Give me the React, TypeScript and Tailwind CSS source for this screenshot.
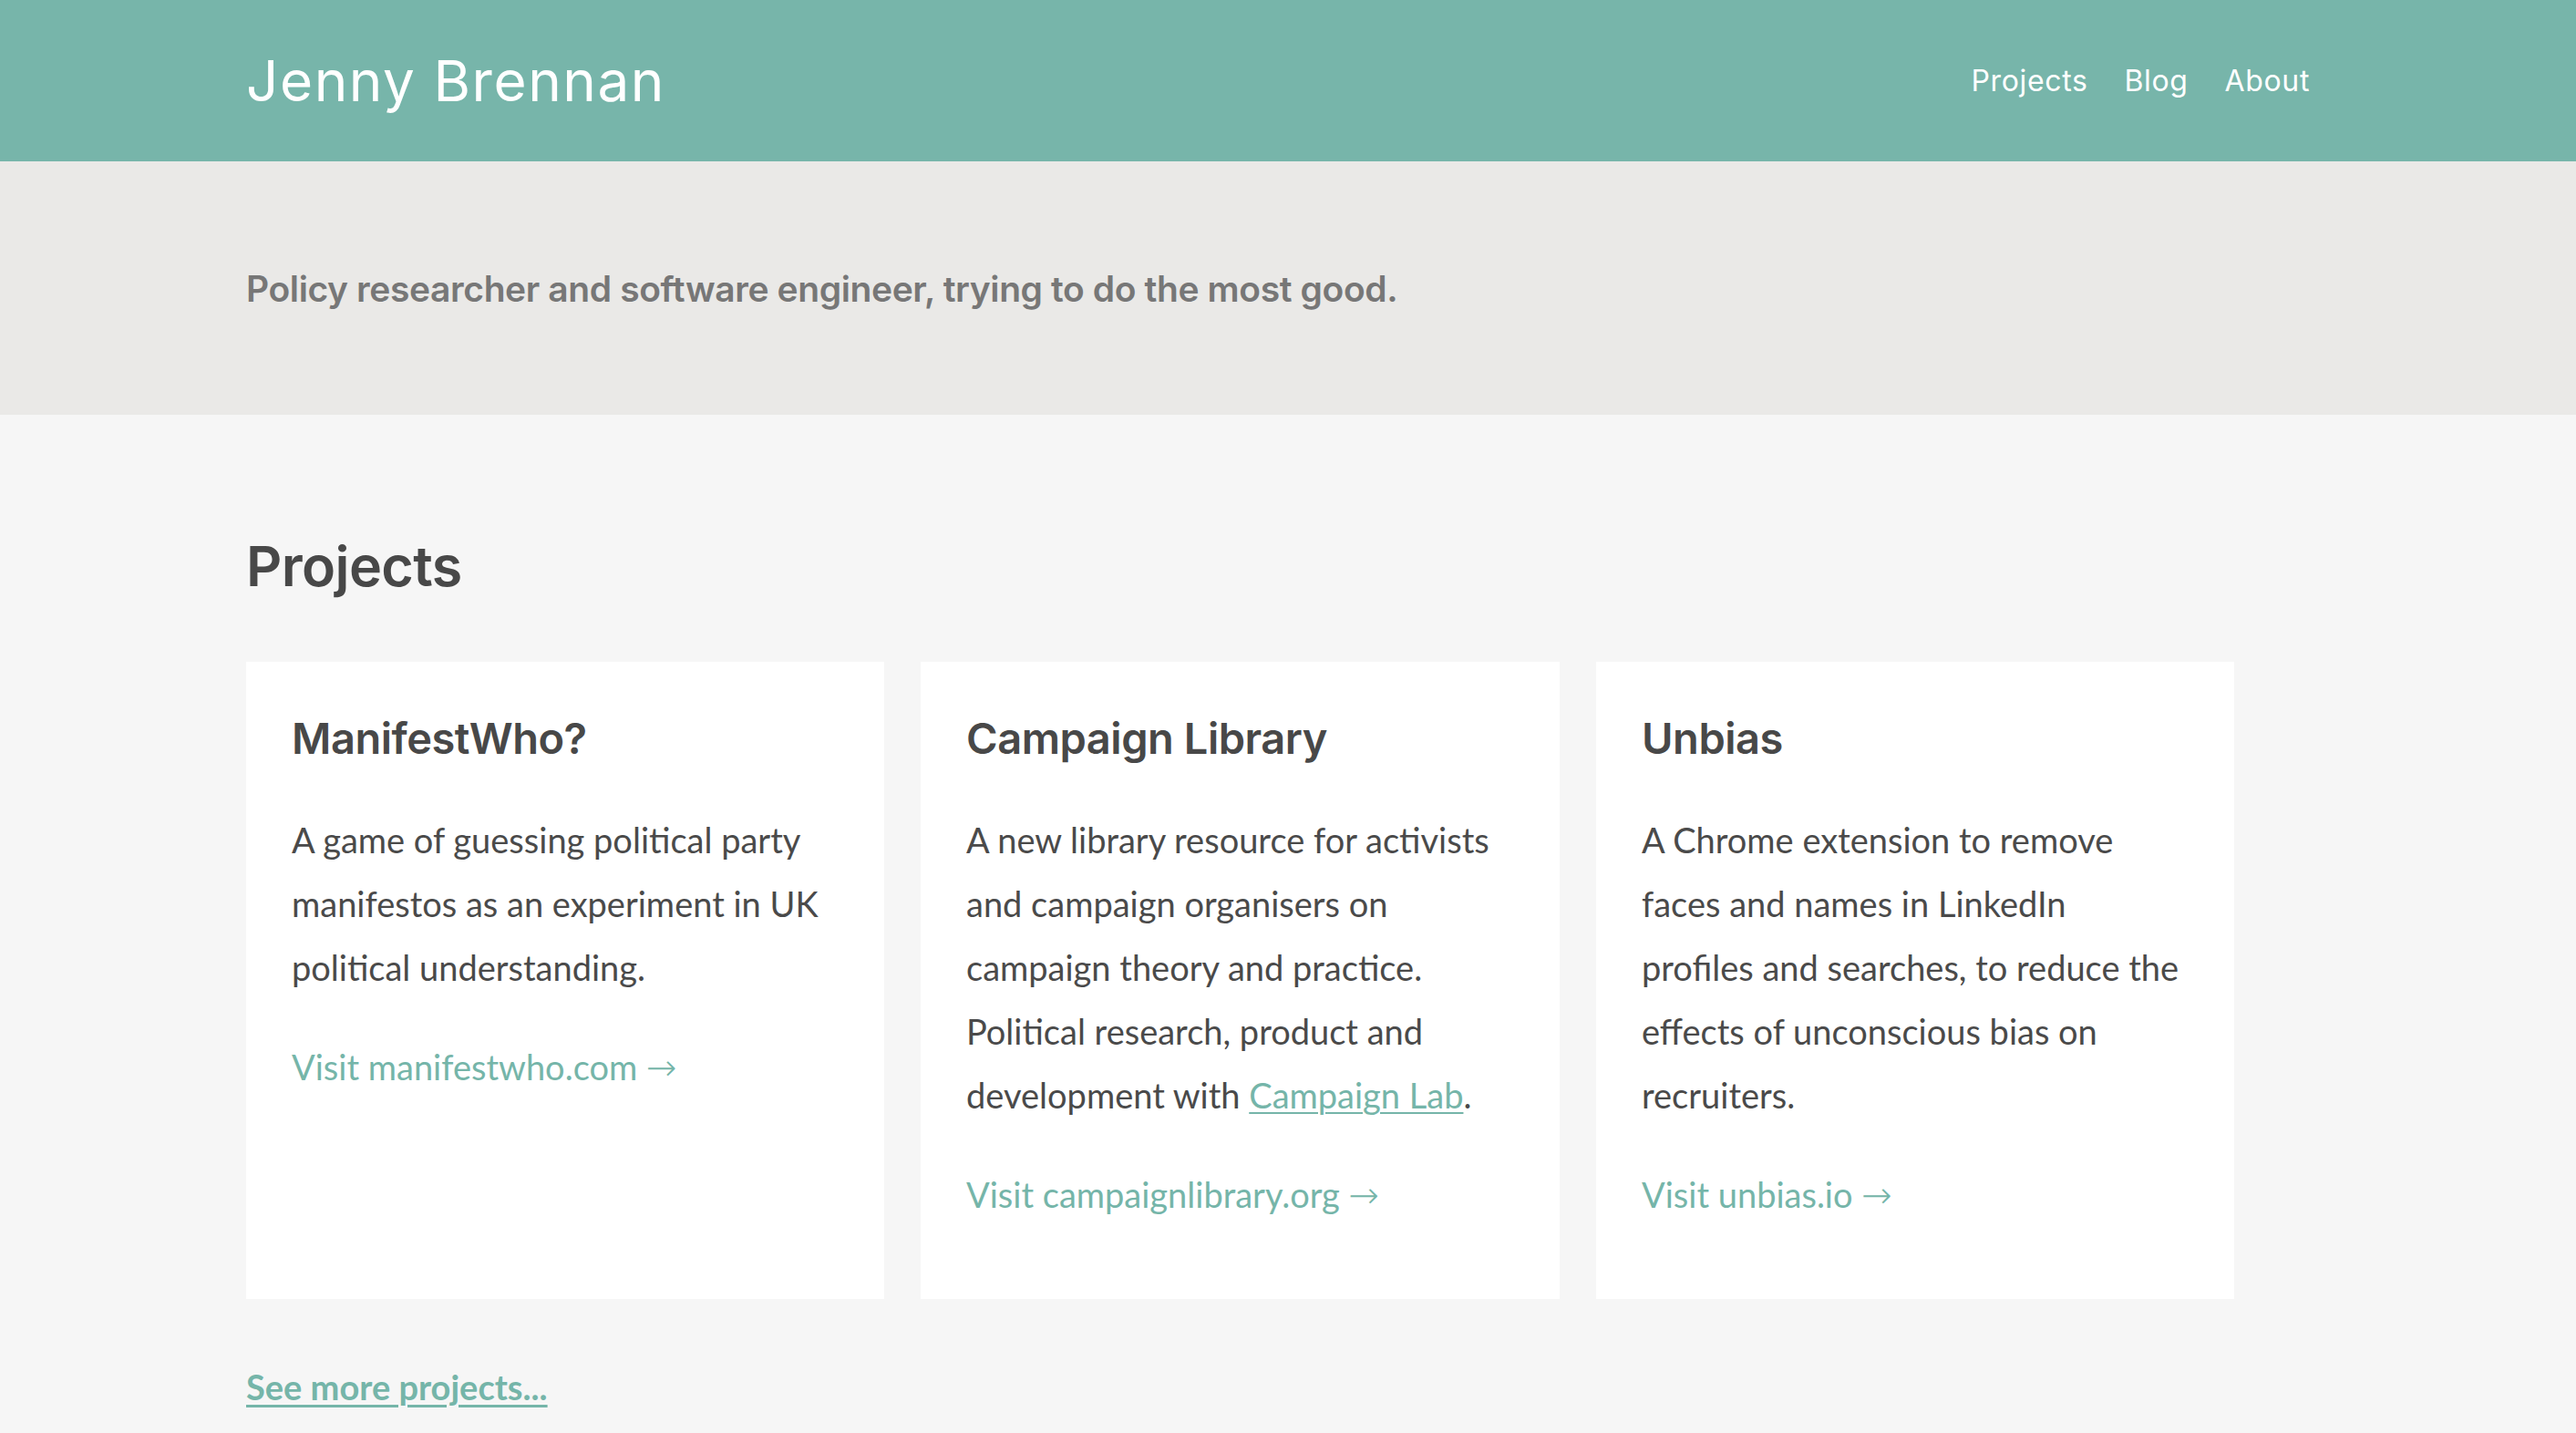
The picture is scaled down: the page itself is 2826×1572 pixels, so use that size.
import React from 'react'

type Project = {
  title: string
  description: React.ReactNode
  linkLabel: string
}

const projects: Project[] = [
  {
    title: 'ManifestWho?',
    description:
      'A game of guessing political party manifestos as an experiment in UK political understanding.',
    linkLabel: 'Visit manifestwho.com',
  },
  {
    title: 'Campaign Library',
    description: (
      <>
        A new library resource for activists and campaign organisers on campaign theory and
        practice. Political research, product and development with{' '}
        <a href="#" className="text-[#75b5a9] underline underline-offset-[4px] decoration-2">
          Campaign Lab
        </a>
        .
      </>
    ),
    linkLabel: 'Visit campaignlibrary.org',
  },
  {
    title: 'Unbias',
    description: (
      <>
        A Chrome extension to remove faces and names in LinkedIn
        <br />
        profiles and searches, to reduce the effects of unconscious bias on recruiters.
      </>
    ),
    linkLabel: 'Visit unbias.io',
  },
]

function ProjectCard({ project }: { project: Project }) {
  return (
    <div className="bg-white px-[50px] pt-[57px] pb-[79px]">
      <h3 className="font-['Inter',_sans-serif] text-[47px] font-semibold leading-[53px] tracking-[-0.01em] text-[#484848]">
        {project.title}
      </h3>
      <p className="mt-[50px] max-w-[600px] font-['Lato',_sans-serif] text-[38px] leading-[70px] text-[#4a4a4a]">
        {project.description}
      </p>
      <a
        href="#"
        className="mt-[39px] block font-['Lato',_sans-serif] text-[38px] leading-[70px] text-[#75b5a9]"
      >
        {project.linkLabel}{' '}
        <span className="font-['DejaVu_Sans',_sans-serif] text-[40px] font-light">→</span>
      </a>
    </div>
  )
}

export default function App() {
  return (
    <div className="min-h-screen bg-[#f6f6f6] text-[#4a4a4a]">
      <header className="h-[177px] bg-[#77b5aa]">
        <div className="ml-[270px] mr-[292px] flex h-full items-center justify-between">
          <a href="#" className="font-['Inter',_sans-serif] text-[62px] font-normal tracking-[0.025em] text-white">
            Jenny Brennan
          </a>
          <nav className="flex items-center gap-[40px] font-['Inter',_sans-serif] text-[32px] tracking-[0.02em] text-white">
            <a href="#">Projects</a>
            <a href="#">Blog</a>
            <a href="#">About</a>
          </nav>
        </div>
      </header>

      <section className="flex h-[278px] items-center bg-[#eae9e7]">
        <p className="ml-[270px] pt-[2px] font-['Inter',_sans-serif] text-[39px] font-semibold tracking-[-0.01em] text-[#777777]">
          Policy researcher and software engineer, trying to do the most good.
        </p>
      </section>

      <main className="ml-[270px] pt-[133px] pb-[60px]">
        <h2 className="font-['Inter',_sans-serif] text-[61px] font-semibold leading-[67px] tracking-[-0.01em] text-[#484848]">
          Projects
        </h2>
        <div className="mt-[71px] grid grid-cols-[700px_701px_700px] gap-[40px]">
          {projects.map((project) => (
            <ProjectCard key={project.title} project={project} />
          ))}
        </div>
        <a
          href="#"
          className="mt-[74px] inline-block font-['Lato',_sans-serif] text-[38px] font-bold leading-[44px] text-[#75b5a9] underline decoration-[3px] underline-offset-[5px]"
        >
          See more projects...
        </a>
      </main>
    </div>
  )
}
